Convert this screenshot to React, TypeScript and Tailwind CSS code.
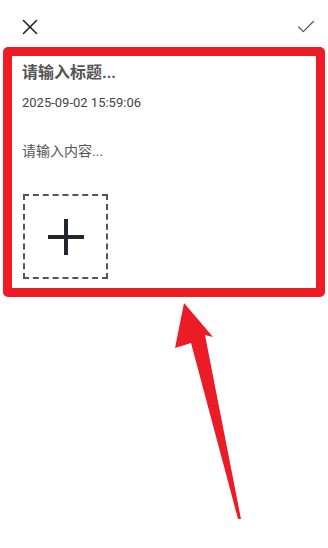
import { X, Check } from "lucide-react";

export default function App() {
  return (
    <div
      className="relative w-[328px] h-[548px] bg-white overflow-hidden"
      style={{ fontFamily: 'Roboto, "Noto Sans CJK SC", sans-serif' }}
    >
      {/* top bar */}
      <div className="flex items-center justify-between h-[47px] pl-[17px] pr-[11px] pt-[6px]">
        <X size={26} strokeWidth={1.5} className="text-[#222]" />
        <Check size={22} strokeWidth={1.3} className="text-[#555]" />
      </div>

      {/* note card, highlighted */}
      <div className="mx-[3px] h-[250px] border-[9px] border-[#ee1c25] rounded-[5px] pl-[10px] pt-[6px] flex flex-col">
        <div className="text-[16px] leading-[22px] font-bold text-[#555]">请输入标题...</div>
        <div className="mt-[10px] text-[13px] leading-[18px] text-[#444]">2025-09-02 15:59:06</div>
        <div className="mt-[29px] text-[14px] leading-[20px] text-[#555]">请输入内容...</div>
        <div className="mt-[33px] ml-[1px] w-[85px] h-[85px] border-2 border-dashed border-[#555] flex items-center justify-center">
          <svg width="36" height="36" viewBox="0 0 36 36">
            <path d="M0 18h36M18 0v36" stroke="#25252f" strokeWidth="4" />
          </svg>
        </div>
      </div>

      {/* annotation arrow */}
      <svg className="absolute left-0 top-0" width="328" height="548" viewBox="0 0 328 548">
        <path
          d="M184 303 L213 337 L205 335 L241 519 L238 519 L191 343 L175 348 Z"
          fill="#ec1c27"
        />
      </svg>
    </div>
  );
}
